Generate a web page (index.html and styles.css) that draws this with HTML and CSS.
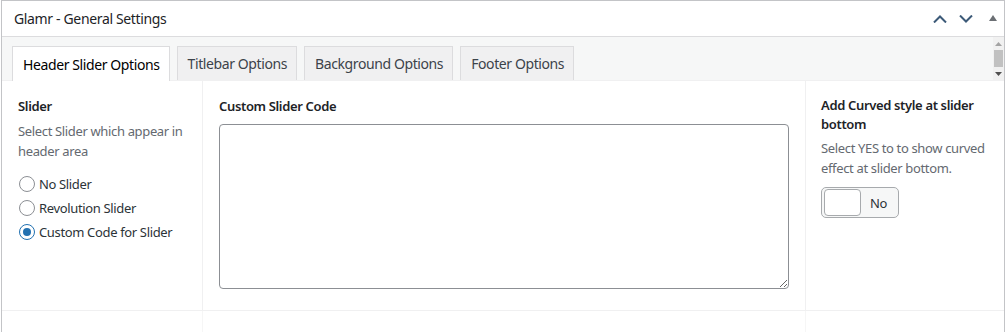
FILE: index.html
```html
<!DOCTYPE html>
<html lang="en">
<head>
  <meta charset="UTF-8">
  <title>Glamr - General Settings</title>
  <link rel="stylesheet" href="styles.css">
</head>
<body>
  <div class="postbox">
    <div class="postbox-header">
      <h2 class="postbox-title">Glamr - General Settings</h2>
      <div class="handle-actions">
        <svg class="chev" width="14" height="8" viewBox="0 0 14 8"><path d="M1 7.5 L7 1.5 L13 7.5" fill="none" stroke="#3c5a78" stroke-width="2"/></svg>
        <svg class="chev" width="14" height="8" viewBox="0 0 14 8"><path d="M1 0.5 L7 6.5 L13 0.5" fill="none" stroke="#3c5a78" stroke-width="2"/></svg>
        <svg class="tri" width="8" height="6" viewBox="0 0 8 6"><path d="M0 6 L4 0 L8 6 Z" fill="#6b6f74"/></svg>
      </div>
    </div>

    <div class="tab-strip">
      <div class="tabs">
        <div class="tab active">Header Slider Options</div>
        <div class="tab">Titlebar Options</div>
        <div class="tab">Background Options</div>
        <div class="tab">Footer Options</div>
      </div>
      <div class="scrollbar">
        <svg width="7" height="4" viewBox="0 0 7 4"><path d="M0 4 L3.5 0 L7 4 Z" fill="#a3a3a3"/></svg>
        <div class="thumb"></div>
        <svg width="7" height="4" viewBox="0 0 7 4"><path d="M0 0 L3.5 4 L7 0 Z" fill="#505050"/></svg>
      </div>
    </div>

    <div class="fields">
      <div class="field field-left">
        <div class="field-title">Slider</div>
        <p class="field-desc">Select Slider which appear in header area</p>
        <ul class="radio-list">
          <li><span class="radio"></span>No Slider</li>
          <li><span class="radio"></span>Revolution Slider</li>
          <li><span class="radio checked"></span>Custom Code for Slider</li>
        </ul>
      </div>
      <div class="field field-mid">
        <div class="field-title">Custom Slider Code</div>
        <textarea class="code-box"></textarea>
      </div>
      <div class="field field-right">
        <div class="field-title">Add Curved style at slider bottom</div>
        <p class="field-desc">Select YES to to show curved effect at slider bottom.</p>
        <div class="toggle">
          <span class="knob"></span>
          <span class="toggle-label">No</span>
        </div>
      </div>
    </div>

    <div class="fields next-row">
      <div class="field field-left"></div>
      <div class="field field-mid"></div>
      <div class="field field-right"></div>
    </div>
  </div>
</body>
</html>
```

FILE: styles.css
```css
* {
  margin: 0;
  padding: 0;
  box-sizing: border-box;
}

body {
  background: #fff;
  font-family: "Noto Sans", "Open Sans", sans-serif;
  font-size: 13px;
  letter-spacing: -0.35px;
  color: #1d2327;
}

.postbox {
  width: 1004px;
  margin-left: 1px;
  border: 1px solid #c3c4c7;
  border-bottom: none;
  background: #fff;
}

.postbox-header {
  display: flex;
  align-items: center;
  justify-content: space-between;
  height: 36px;
  border-bottom: 1px solid #dcdcde;
  padding: 0 7px 0 12px;
}

.postbox-title {
  font-size: 14px;
  font-weight: 400;
  color: #1d2327;
}

.handle-actions {
  display: flex;
  align-items: center;
  gap: 12px;
}

.handle-actions .tri {
  margin-left: 4px;
  margin-top: -2px;
}

/* Tabs */
.tab-strip {
  display: flex;
  justify-content: space-between;
  height: 44px;
  background: #f6f7f7;
  border-bottom: 1px solid #f0f0f1;
}

.tabs {
  display: flex;
  align-items: flex-end;
  gap: 7px;
  padding-left: 10px;
}

.tab {
  height: 34px;
  padding: 0 9px 0 10px;
  display: flex;
  align-items: center;
  font-size: 14px;
  letter-spacing: -0.4px;
  color: #3c434a;
  background: #f0f0f1;
  border: 1px solid #dcdcde;
  border-bottom: none;
}

.tab.active {
  background: #fff;
  color: #000;
  height: 35px;
  margin-bottom: -1px;
}

.scrollbar {
  width: 11px;
  display: flex;
  flex-direction: column;
  align-items: center;
  background: #f1f1f1;
  padding-top: 5px;
}

.scrollbar .thumb {
  width: 9px;
  height: 17px;
  background: #c1c1c1;
  margin: 4px 0 5px;
}

/* Fields */
.fields {
  display: flex;
  border-bottom: 1px solid #f0f0f1;
}

.field {
  padding: 15px 16px 0;
}

.field-left {
  width: 201px;
  border-right: 1px solid #f0f0f1;
  height: 229px;
}

.field-mid {
  width: 603px;
  border-right: 1px solid #f0f0f1;
}

.field-right {
  flex: 1;
  padding: 15px 8px 0 15px;
}

.field-title {
  font-weight: 600;
  line-height: 20px;
}

.field-right .field-title {
  line-height: 19px;
}

.field-desc {
  margin-top: 5px;
  color: #646970;
  line-height: 20px;
}

.field-right .field-desc {
  margin-top: 4px;
}

.radio-list {
  list-style: none;
  margin-top: 11px;
  color: #2c3338;
}

.radio-list li {
  display: flex;
  align-items: center;
  gap: 4px;
  height: 24px;
  padding-left: 1px;
}

.radio {
  width: 16px;
  height: 16px;
  border: 1px solid #8c8f94;
  border-radius: 50%;
  background: #fff;
  display: flex;
  align-items: center;
  justify-content: center;
}

.radio.checked {
  border-color: #2271b1;
}

.radio.checked::after {
  content: "";
  width: 8px;
  height: 8px;
  border-radius: 50%;
  background: #2271b1;
}

.code-box {
  display: block;
  width: 570px;
  height: 165px;
  margin-top: 8px;
  border: 1px solid #8c8f94;
  border-radius: 4px;
  resize: both;
  background: #fff;
}

.toggle {
  display: flex;
  align-items: center;
  width: 78px;
  height: 31px;
  margin-top: 9px;
  border: 1px solid #a7aaad;
  border-radius: 5px;
  background: #f6f7f7;
  padding: 2px;
}

.knob {
  width: 37px;
  height: 27px;
  background: #fff;
  border: 1px solid #a7aaad;
  border-radius: 4px;
}

.toggle-label {
  flex: 1;
  text-align: center;
  color: #2c3338;
}

.next-row {
  border-bottom: none;
}

.next-row .field {
  height: 22px;
  border-right-color: #f6f6f6;
}
```
